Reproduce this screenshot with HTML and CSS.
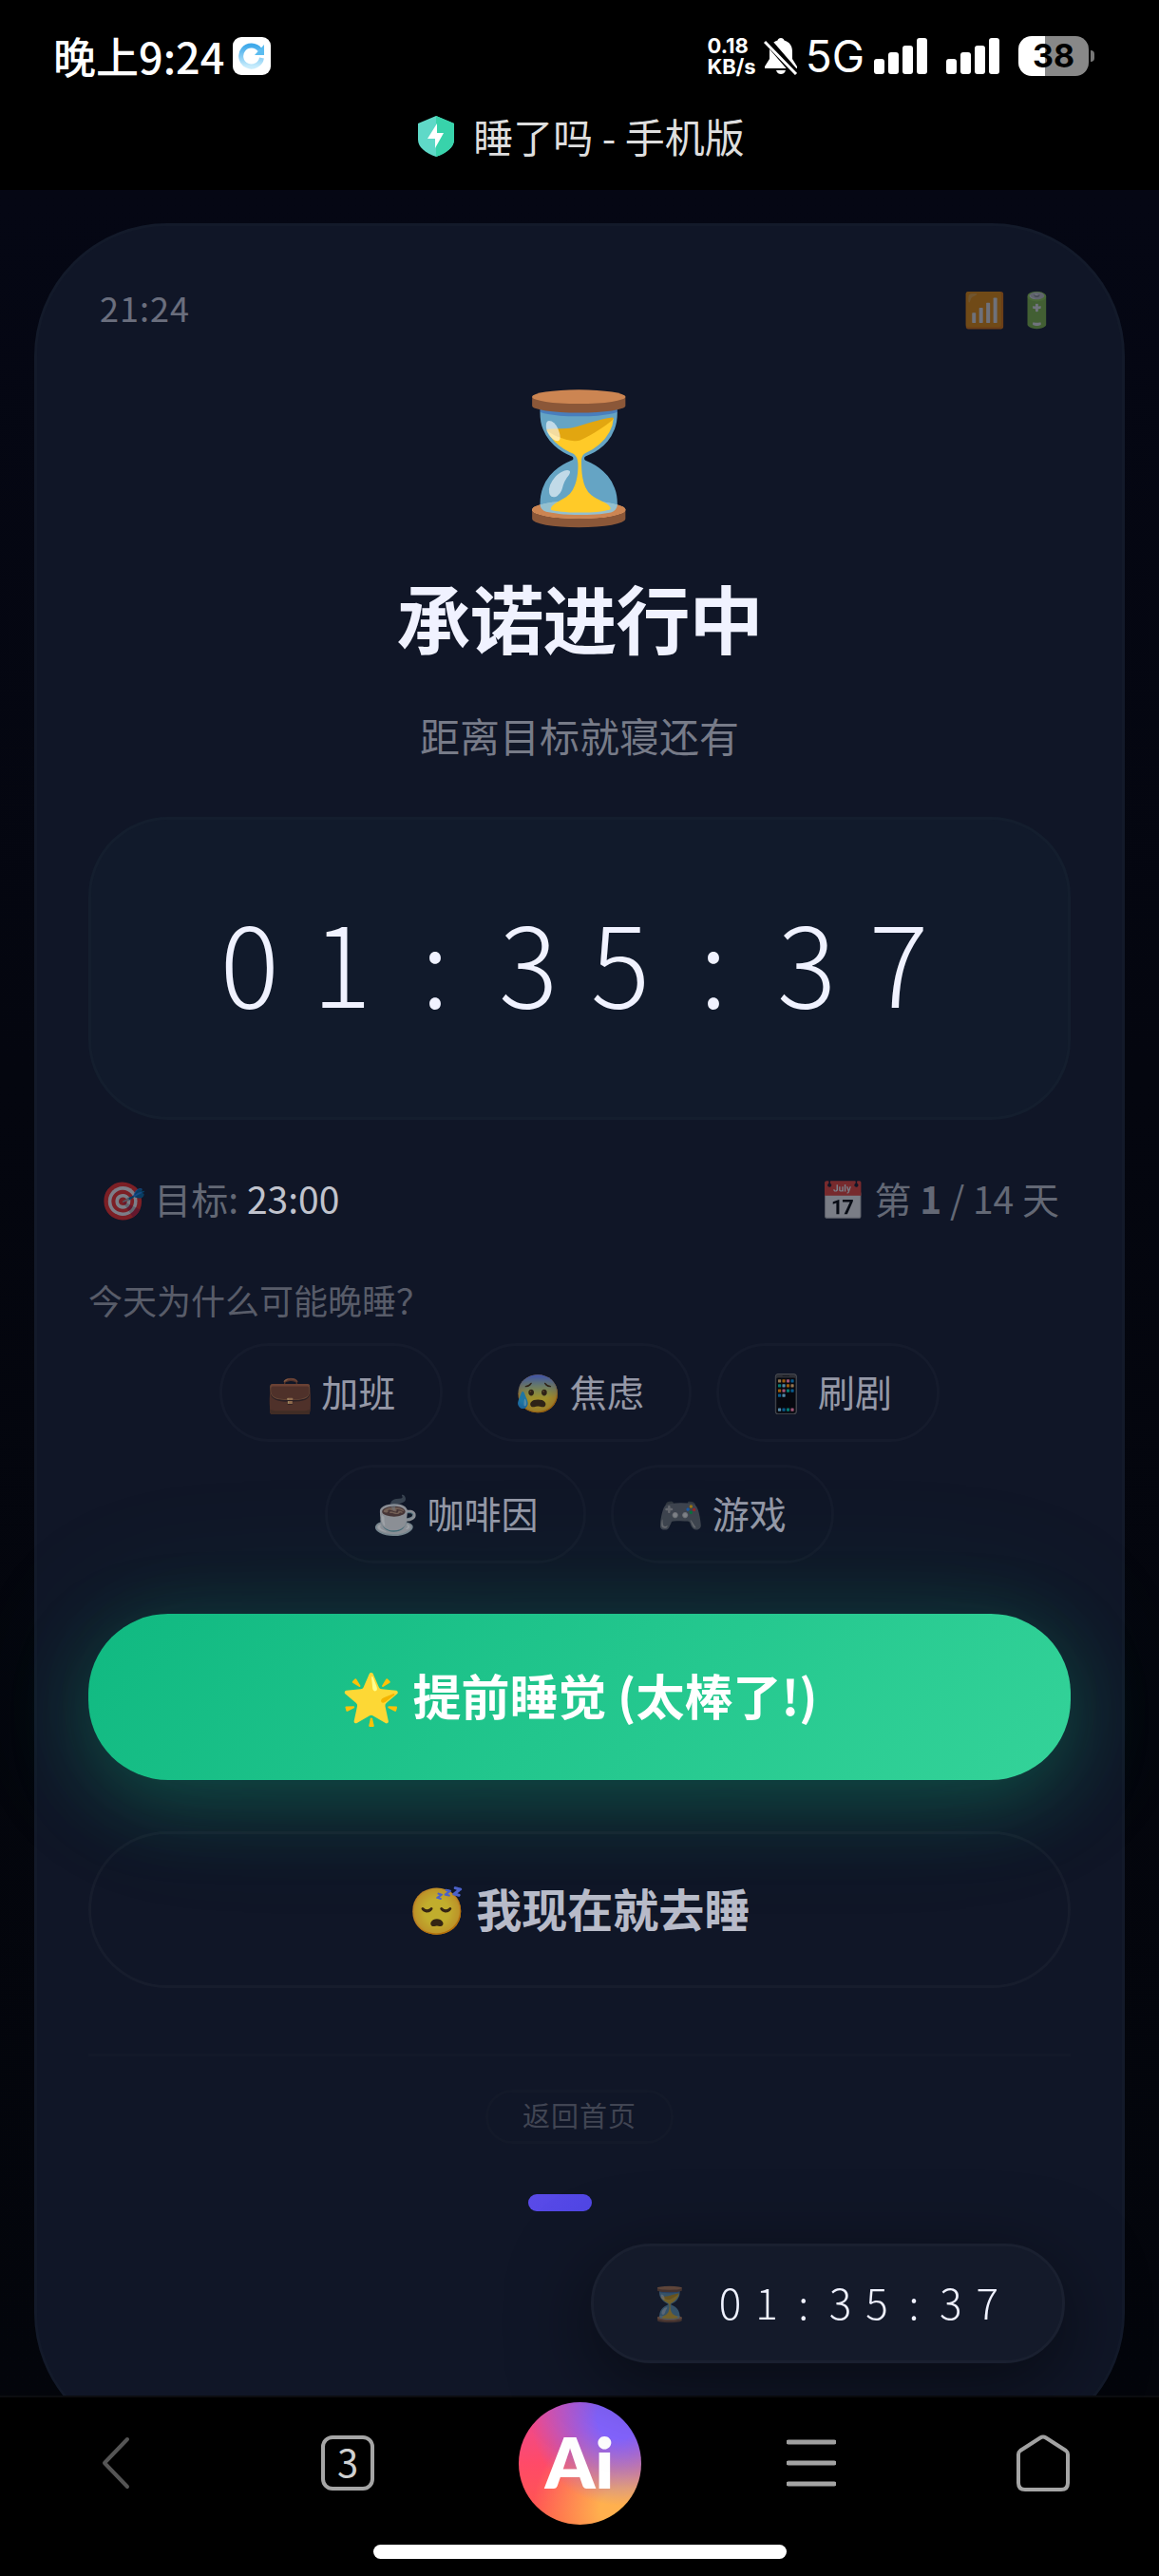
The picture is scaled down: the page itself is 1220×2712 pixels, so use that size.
FILE: index.html
```html
<!DOCTYPE html>
<html lang="zh-CN">
<head>
<meta charset="utf-8">
<meta name="viewport" content="width=device-width, initial-scale=1">
<title>睡了吗 - 手机版</title>
<link rel="stylesheet" href="styles.css">
</head>
<body>
    <!-- 系统状态栏 + 标题 -->
    <header class="top">
        <div class="sysbar">
            <div class="sys-left">
                <span class="sys-time">晚上9:24</span>
                <svg class="sys-app" viewBox="0 0 40 40" aria-hidden="true">
                    <defs>
                        <linearGradient id="ring" x1="0" y1="0" x2="0" y2="1">
                            <stop offset="0" stop-color="#3fa9ea"/>
                            <stop offset="1" stop-color="#c8ecfc"/>
                        </linearGradient>
                    </defs>
                    <rect width="40" height="40" rx="9" fill="#fff"/>
                    <path d="M28.500 13.500A11 11 0 1 0 30.500 22" fill="none" stroke="url(#ring)" stroke-width="5"/>
                    <path d="M33 8v11H23z" fill="#5bbcf0"/>
                </svg>
            </div>
            <div class="sys-right">
                <div class="speed">0.18<br>KB/s</div>
                <svg class="bell" viewBox="0 0 36 40" aria-hidden="true">
                    <path d="M18 1c2 0 3 1 3.500 2.500C27 5 30 9.500 30 15v8l5 8v2H1v-2l5-8v-8C6 9.500 9 5 14.500 3.500 15 2 16 1 18 1z" fill="#fff"/>
                    <path d="M13 35h10c-1 3-3 4-5 4s-4-1-5-4z" fill="#fff"/>
                    <path d="M3 3l32 37" stroke="#000" stroke-width="8"/>
                    <path d="M1 5l33 34" stroke="#fff" stroke-width="3"/>
                </svg>
                <span class="net">5G</span>
                <svg class="bars" viewBox="0 0 56 38" aria-hidden="true">
                    <g fill="#fff">
                        <rect x="0" y="22" width="11" height="16" rx="3"/>
                        <rect x="15" y="15" width="11" height="23" rx="3"/>
                        <rect x="30" y="8" width="11" height="30" rx="3"/>
                        <rect x="45" y="0" width="11" height="38" rx="3"/>
                    </g>
                </svg>
                <svg class="bars bars2" viewBox="0 0 56 38" aria-hidden="true">
                    <g fill="#fff">
                        <rect x="0" y="22" width="11" height="16" rx="3"/>
                        <rect x="15" y="15" width="11" height="23" rx="3"/>
                        <rect x="30" y="8" width="11" height="30" rx="3"/>
                        <rect x="45" y="0" width="11" height="38" rx="3"/>
                    </g>
                </svg>
                <span class="battery">38</span>
                <span class="battery-cap"></span>
            </div>
        </div>
        <div class="titlebar">
            <svg class="shield" viewBox="0 0 38 43" aria-hidden="true">
                <path d="M19 0l19 8v17c0 8-8 14-19 18C8 39 0 33 0 25V8z" fill="#5fd9c8"/>
                <path d="M19 0l19 8v17c0 8-8 14-19 18z" fill="#38d3ab"/>
                <path d="M20 8L10 24h8v10l9-16h-7z" fill="#fff"/>
            </svg>
            <span>睡了吗 - 手机版</span>
        </div>
    </header>

    <main class="page">
        <section class="phone">
            <div class="phone-bar">
                <span>21:24</span>
                <span>📶 🔋</span>
            </div>
            <div class="hourglass">⏳</div>
            <h1>承诺进行中</h1>
            <p class="sub">距离目标就寝还有</p>
            <div class="timer">01<i>:</i>35<i>:</i>37</div>
            <div class="info">
                <span><i>🎯</i> 目标: <b class="goal">23:00</b></span>
                <span><i>📅</i> 第 <b>1</b> / 14 天</span>
            </div>
            <p class="ask">今天为什么可能晚睡？</p>
            <div class="chips">
                <button type="button">💼 加班</button>
                <button type="button">😰 焦虑</button>
                <button type="button">📱 刷剧</button>
                <button type="button">☕ 咖啡因</button>
                <button type="button">🎮 游戏</button>
            </div>
            <button type="button" class="btn btn-early">🌟 提前睡觉 (太棒了!)</button>
            <button type="button" class="btn btn-now">😴 我现在就去睡</button>
            <div class="foot">
                <a href="#" class="back-home">返回首页</a>
            </div>
            <div class="dots"><span class="active"></span><span></span></div>
        </section>
    </main>

    <!-- 悬浮倒计时 -->
    <div class="float">
        <span class="float-icon">⏳</span>
        <span class="float-time">01<i>:</i>35<i>:</i>37</span>
    </div>

    <!-- 浏览器底栏 -->
    <footer class="bottom">
        <nav class="tabs">
            <button type="button" aria-label="后退">
                <svg width="30" height="56" viewBox="0 0 30 56"><path d="M27 3L3 28l24 25" fill="none" stroke="#555" stroke-width="4" stroke-linecap="round" stroke-linejoin="round"/></svg>
            </button>
            <button type="button" aria-label="标签页"><span class="count">3</span></button>
            <button type="button" aria-label="AI"><span class="ai">Ai</span></button>
            <button type="button" aria-label="菜单">
                <svg width="52" height="50" viewBox="0 0 52 50"><path d="M2 3h48M2 25h48M2 47h48" stroke="#a5a5a5" stroke-width="5" stroke-linecap="round"/></svg>
            </button>
            <button type="button" aria-label="主页">
                <svg width="58" height="62" viewBox="0 0 58 62"><path d="M26 4.500L5 18q-2 1.500-2 4v30q0 7 7 7h38q7 0 7-7V22q0-2.500-2-4L32 4.500q-3-2-6 0z" fill="none" stroke="#a5a5a5" stroke-width="4" stroke-linejoin="round"/></svg>
            </button>
        </nav>
        <div class="homebar"></div>
    </footer>
</body>
</html>
```
FILE: styles.css
```css
*{
    box-sizing: border-box;
}
body,h1,p{
    margin: 0;
    padding: 0;
}
html,body{
    height: 100%;
}
body{
    display: flex;
    flex-direction: column;
    overflow: hidden;
    background: #000;
    color: #f0f2ff;
    font-family: "Noto Sans CJK SC","Noto Color Emoji",sans-serif;
}
button{
    font-family: inherit;
    cursor: pointer;
}
i{
    font-style: normal;
}

/* 顶部 */
.top{
    flex: none;
    height: 200px;
    background: #000;
}
.sysbar{
    display: flex;
    justify-content: space-between;
    align-items: center;
    height: 118px;
    padding: 0 68px 0 56px;
    color: #fff;
}
.sys-left,.sys-right{
    display: flex;
    align-items: center;
}
.sys-time{
    font-size: 45px;
    font-weight: 500;
    line-height: 60px;
}
.sys-app{
    width: 40px;
    height: 40px;
    margin-left: 9px;
}
.speed{
    font: bold 22px/22px Inter,sans-serif;
}
.bell{
    width: 36px;
    height: 40px;
    margin: 0 8px;
}
.net{
    font: 46px/60px Inter,sans-serif;
}
.bars{
    width: 56px;
    height: 38px;
    margin-left: 10px;
}
.bars2{
    margin-left: 20px;
}
.battery{
    width: 74px;
    height: 42px;
    margin-left: 20px;
    border-radius: 14px;
    background: linear-gradient(90deg,#fff 28px,#888 28px);
    color: #000;
    font: bold 34px/42px Inter,sans-serif;
    text-align: center;
}
.battery-cap{
    width: 4px;
    height: 12px;
    margin-left: 2px;
    border-radius: 0 4px 4px 0;
    background: #777;
}
.titlebar{
    display: flex;
    justify-content: center;
    align-items: center;
    gap: 20px;
    height: 50px;
    padding-left: 4px;
    color: #dedede;
    font-size: 42px;
    line-height: 50px;
}
.shield{
    width: 38px;
    height: 43px;
}

/* 页面 */
.page{
    flex: 1;
    min-height: 0;
    overflow: hidden;
    padding: 35px 36px 0;
    background: linear-gradient(180deg,#050714,#04060f 40%,#03050b);
}
.phone{
    display: flex;
    flex-direction: column;
    padding: 59px 54px 244px;
    border: 3px solid #131a2a;
    border-radius: 140px;
    background: #101627;
}
.phone-bar{
    display: flex;
    justify-content: space-between;
    padding: 0 12px;
    font-size: 36px;
    line-height: 52px;
    letter-spacing: 1px;
    opacity: .4;
}
.hourglass{
    margin-top: 42px;
    font-size: 132px;
    line-height: 160px;
    text-align: center;
}
h1{
    margin-top: 48px;
    font-size: 78px;
    font-weight: 700;
    line-height: 100px;
    letter-spacing: -1px;
    text-align: center;
}
.sub{
    margin-top: 45px;
    color: #777b88;
    font-size: 42px;
    line-height: 60px;
    text-align: center;
}
.timer{
    margin-top: 56px;
    padding: 77px 0 96px 24px;
    border: 3px solid #141e2e;
    border-radius: 84px;
    background: #111a2b;
    font-size: 116px;
    font-weight: 300;
    line-height: 140px;
    letter-spacing: 35px;
    text-align: center;
}
/* 冒号和数字等宽 */
.timer i{
    display: inline-block;
    width: 64px;
    margin-right: 35px;
    letter-spacing: 0;
}
.info{
    display: flex;
    justify-content: space-between;
    margin-top: 52px;
    padding: 0 12px;
    color: #636875;
    font-size: 39px;
    line-height: 60px;
}
.info i{
    opacity: .45;
}
.info .goal{
    color: #c0c3cd;
    font-weight: 400;
}
.ask{
    margin-top: 50px;
    color: #585c69;
    font-size: 36px;
    line-height: 54px;
}
.chips{
    display: flex;
    flex-wrap: wrap;
    justify-content: center;
    gap: 24px 26px;
    margin-top: 19px;
    padding: 0 120px;
}
.chips button{
    height: 104px;
    padding: 0 47px 4px;
    border: 3px solid #151b2c;
    border-radius: 52px;
    background: none;
    color: rgba(240,242,255,.6);
    font-size: 39px;
}
.btn{
    padding: 0 0 5px;
    border-radius: 84px;
    font-weight: 700;
}
.btn-early{
    height: 175px;
    margin-top: 53px;
    border: 0;
    background: linear-gradient(135deg,#10b981,#34d399);
    box-shadow: 0 22px 84px rgba(16,185,129,.3),0 0 160px rgba(16,185,129,.12);
    color: #fff;
    font-size: 51px;
}
.btn-now{
    height: 165px;
    margin-top: 54px;
    border: 3px solid rgba(240,242,255,.03);
    background: none;
    color: rgba(240,242,255,.75);
    font-size: 48px;
}
.foot{
    display: flex;
    justify-content: center;
    margin-top: 69px;
    padding-top: 35px;
    border-top: 3px solid #131929;
}
.back-home{
    padding: 0 36px 4px;
    border: 3px solid #131929;
    border-radius: 28px;
    color: #414553;
    font-size: 29px;
    line-height: 47px;
    letter-spacing: 1px;
    text-decoration: none;
}
.dots{
    display: flex;
    justify-content: center;
    gap: 22px;
    margin-top: 53px;
}
.dots span{
    width: 20px;
    height: 18px;
    border-radius: 9px;
}
.dots .active{
    width: 67px;
    background: linear-gradient(135deg,#5b4be8,#4f46e5);
}

/* 悬浮倒计时 */
.float{
    position: fixed;
    right: 99px;
    bottom: 224px;
    display: flex;
    align-items: center;
    gap: 30px;
    height: 126px;
    padding: 0 52px 5px 58px;
    border: 3px solid #1a2030;
    border-radius: 63px;
    background: #141a2a;
    box-shadow: 0 22px 84px rgba(0,0,0,.5);
}
.float-icon{
    font-size: 35px;
    opacity: .4;
}
.float-time{
    font-size: 44px;
    font-weight: 300;
    letter-spacing: 15px;
}
.float-time i{
    display: inline-block;
    width: 24px;
    margin-right: 15px;
    letter-spacing: 0;
    text-align: center;
}

/* 底栏 */
.bottom{
    flex: none;
    height: 190px;
    border-top: 2px solid #0c0d10;
    background: #000;
}
.tabs{
    display: grid;
    grid-template-columns: repeat(5,1fr);
    height: 138px;
}
.tabs button{
    display: flex;
    justify-content: center;
    align-items: center;
    padding: 0;
    border: 0;
    background: none;
}
.count{
    width: 56px;
    height: 58px;
    border: 4px solid #a5a5a5;
    border-radius: 12px;
    color: #d0d0d0;
    font-size: 40px;
    line-height: 46px;
}
.ai{
    width: 129px;
    height: 129px;
    border-radius: 50%;
    background:
        radial-gradient(circle at 82% 12%,#8464ff 15%,rgba(132,100,255,0) 60%),
        radial-gradient(circle at 85% 88%,#ffb04e 15%,rgba(255,176,78,0) 60%),
        linear-gradient(180deg,#e94a9a,#ff4a68 50%,#ff5a4a);
    color: #fff;
    font: 800 74px/125px Lato,sans-serif;
}
.homebar{
    width: 435px;
    height: 15px;
    margin: 17px auto 0;
    border-radius: 8px;
    background: #fff;
}
```
